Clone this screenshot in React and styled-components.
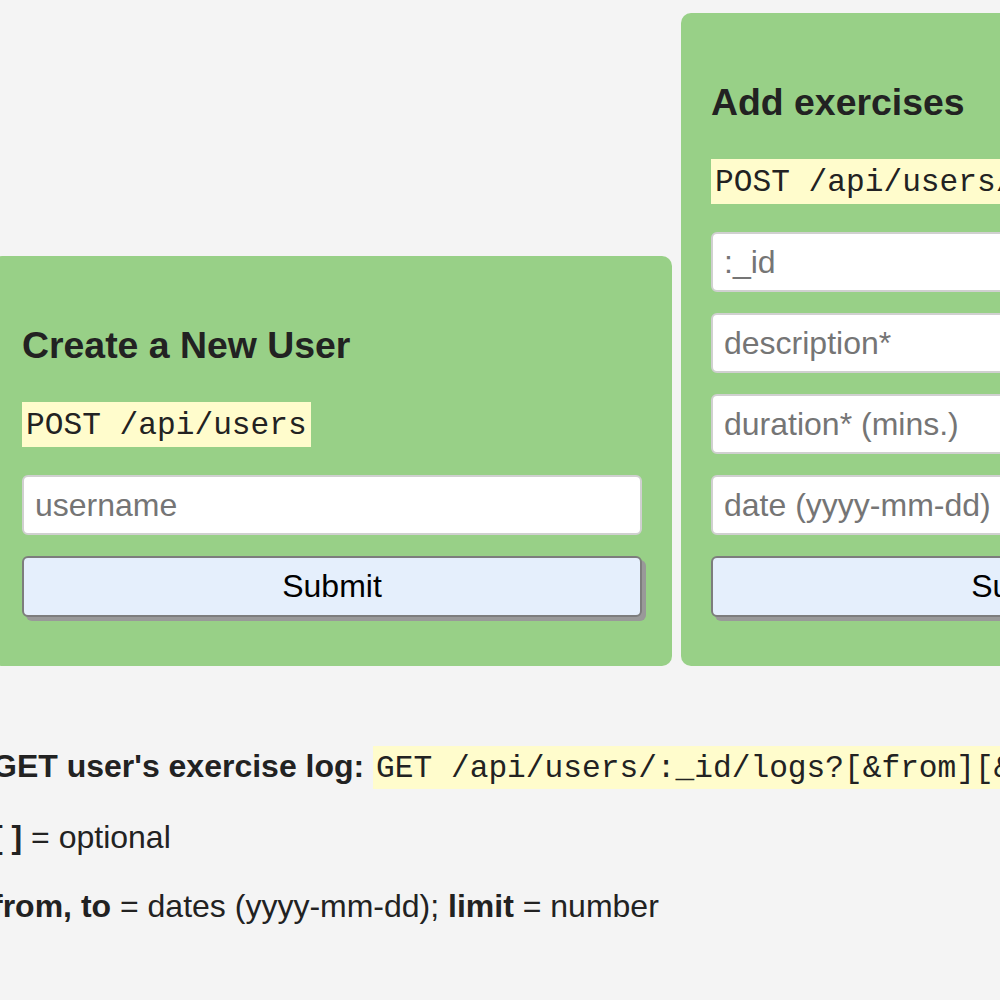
import styled, { createGlobalStyle } from 'styled-components';

const GlobalStyle = createGlobalStyle`
  * {
    box-sizing: border-box;
  }
  html, body {
    margin: 0;
    padding: 0;
    overflow: hidden;
    background: #f4f4f4;
  }
  body {
    font-family: "Liberation Sans", Arial, Helvetica, sans-serif;
    color: #222;
  }
`;

export default function App() {
  return (
    <>
      <GlobalStyle />
      <Page>
        <Forms>
          <Card>
            <Title>Create a New User</Title>
            <CodeLine>
              <Code>POST /api/users</Code>
            </CodeLine>
            <Field type="text" placeholder="username" />
            <SubmitButton type="button">Submit</SubmitButton>
          </Card>
          <Card>
            <Title>Add exercises</Title>
            <CodeLine>
              <Code>POST /api/users/:_id/exercises</Code>
            </CodeLine>
            <Field type="text" placeholder=":_id" />
            <Field type="text" placeholder="description*" />
            <Field type="text" placeholder="duration* (mins.)" />
            <Field type="text" placeholder="date (yyyy-mm-dd)" />
            <SubmitButton type="button">Submit</SubmitButton>
          </Card>
        </Forms>

        <Info>
          <Para>
            <strong>GET user's exercise log: </strong>
            <InlineCode>GET /api/users/:_id/logs?[&amp;from][&amp;to][&amp;limit]</InlineCode>
          </Para>
          <Para>
            <strong>[ ]</strong> = optional
          </Para>
          <Para>
            <strong>from, to</strong> = dates (yyyy-mm-dd); <strong>limit</strong> = number
          </Para>
        </Info>
      </Page>
    </>
  );
}

const Page = styled.div`
  width: max-content;
  margin-left: -8px;
  padding-top: 13px;
`;

const Forms = styled.div`
  display: flex;
  align-items: flex-end;
  gap: 9px;
`;

const Card = styled.form`
  display: flex;
  flex-direction: column;
  width: 680px;
  padding: 68px 30px 49px;
  background: #98d087;
  border-radius: 10px;
`;

const Title = styled.h2`
  margin: 0;
  font-size: 37.4px;
  line-height: 42px;
  font-weight: bold;
  color: #222;
`;

const CodeLine = styled.div`
  display: flex;
  margin: 36px 0 28px;
`;

const Code = styled.code`
  padding: 5px 4px 3px;
  line-height: 37px;
  font-family: "Liberation Mono", "Courier New", monospace;
  font-size: 31.2px;
  color: #222;
  background: #fffccc;
  white-space: nowrap;
`;

const Field = styled.input`
  width: 100%;
  height: 60px;
  margin: 0 0 21px;
  padding: 0 11px;
  font-family: "Liberation Sans", Arial, sans-serif;
  font-size: 32px;
  color: #222;
  background: #fff;
  border: 2px solid #d0d0d0;
  border-radius: 6px;
  outline: none;

  &::placeholder {
    color: #757575;
  }
`;

const SubmitButton = styled.button`
  width: 100%;
  height: 61px;
  padding: 0;
  font-family: "Liberation Sans", Arial, sans-serif;
  font-size: 32px;
  color: #000;
  background: #e5effc;
  border: 2px solid #7d7d7d;
  border-radius: 6px;
  box-shadow: 4px 4px 0 #999;
  cursor: pointer;
`;

const Info = styled.div`
  margin-top: 82px;
`;

const Para = styled.p`
  margin: 0 0 32px;
  font-size: 32px;
  line-height: 37px;
  white-space: nowrap;

  strong {
    font-weight: bold;
  }
`;

const InlineCode = styled.code`
  padding: 5px 3px 3px;
  font-family: "Liberation Mono", "Courier New", monospace;
  font-size: 31.2px;
  color: #222;
  background: #fffccc;
`;
